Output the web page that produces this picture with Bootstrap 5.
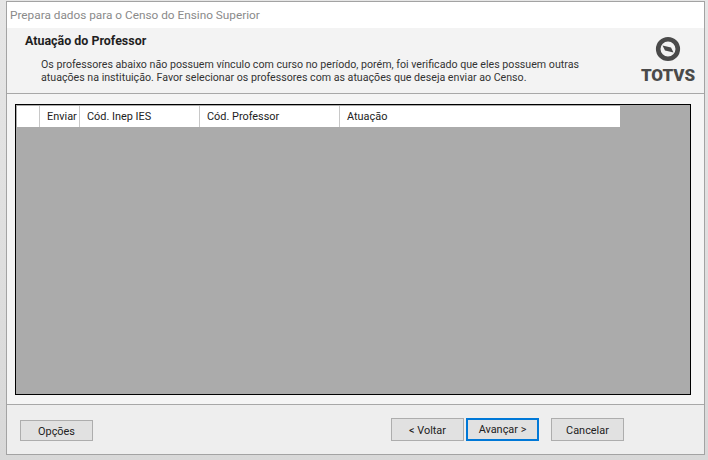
<!DOCTYPE html>
<html lang="pt"><head><meta charset="utf-8"><title>Censo</title>
<link rel="stylesheet" href="https://cdn.jsdelivr.net/npm/bootstrap@5.3.0/dist/css/bootstrap.min.css">
<style>
html,body{margin:0;height:460px;overflow:hidden;background:#fff;}
body{font-family:Roboto,"Liberation Sans",sans-serif;font-size:12px;line-height:14px;color:#222;}
.desk{height:460px;padding:1px 3px 5px 6px;background:linear-gradient(#e6e6e6,#d8d8d8);}
.wiz{height:454px;border:1px solid #a3a3a3;background:#f0f0f0;}
.tbar{height:26px;background:#fff;color:#8a8a8a;font-size:11.8px;padding-left:3px;}
.headp{height:66px;background:#f3f3f3;border-bottom:1px solid #a8a8a8;padding:6px 10px 0 18px;}
.htitle{font-weight:700;font-size:12.45px;color:#1f1f1f;margin:0 0 10px;line-height:14px;}
.hdesc{margin:0 0 0 16px;font-size:10.65px;line-height:13px;color:#333;width:550px;}
.logo{width:52px;margin-top:2px;color:#4a4a4a;}
.logotxt{font-weight:900;font-size:17px;line-height:17px;margin-top:5px;text-align:center;}
.midp{height:313px;background:#f5f5f5;padding:10px 13px 0 8px;border-bottom:1px solid #a8a8a8;}
.gridb{height:291px;border:1px solid #000;background:#ababab;padding:1px 0 0 1px;}
.ghead{height:21px;width:603px;background:#fff;}
.gc{border-right:1px solid #c8c8c8;padding:1px 0 0 7px;line-height:20px;font-size:10.9px;color:#222;white-space:nowrap;}
.footp{background:#eee;height:49px;padding:13px 80px 0 13px;}
.wb{width:73px;height:23px;background:#e1e1e1;border:1px solid #adadad;font-size:10.9px;line-height:20px;text-align:center;color:#222;padding:2px 0 0;border-radius:0;}
.wb.opt{height:21px;line-height:18px;margin-top:2px;}
.wb.def{border:2px solid #0078d7;line-height:17px;padding-top:0;margin-left:2px;margin-right:12px;}
</style></head><body>
<div class="desk"><div class="wiz d-flex flex-column">
<div class="tbar d-flex align-items-center">Prepara dados para o Censo do Ensino Superior</div>
<div class="headp d-flex justify-content-between">
 <div><p class="htitle">Atuação do Professor</p>
 <p class="hdesc">Os professores abaixo não possuem vínculo com curso no período, porém, foi verificado que eles possuem outras atuações na instituição. Favor selecionar os professores com as atuações que deseja enviar ao Censo.</p></div>
 <div class="logo d-flex flex-column align-items-center">
  <svg width="26" height="26" viewBox="0 0 26 26"><circle cx="13" cy="13" r="9.8" fill="none" stroke="currentColor" stroke-width="4.6"/><path d="M7.5 9.5 L16 11.5 L18.5 16.5 L10 14.5 Z" fill="currentColor"/></svg>
  <div class="logotxt">TOTVS</div>
 </div>
</div>
<div class="midp"><div class="gridb"><div class="ghead d-flex">
 <div class="gc" style="width:23px"></div>
 <div class="gc" style="width:40px">Enviar</div>
 <div class="gc" style="width:120px">Cód. Inep IES</div>
 <div class="gc" style="width:140px">Cód. Professor</div>
 <div class="gc border-0" style="width:280px">Atuação</div>
</div></div></div>
<div class="footp d-flex align-items-start">
 <button class="wb opt" type="button">Opções</button>
 <div class="ms-auto d-flex"><button class="wb" type="button">&lt; Voltar</button><button class="wb def" type="button">Avançar &gt;</button><button class="wb" type="button">Cancelar</button></div>
</div>
</div></div>
<script src="https://cdn.jsdelivr.net/npm/bootstrap@5.3.0/dist/js/bootstrap.bundle.min.js"></script>
</body></html>
